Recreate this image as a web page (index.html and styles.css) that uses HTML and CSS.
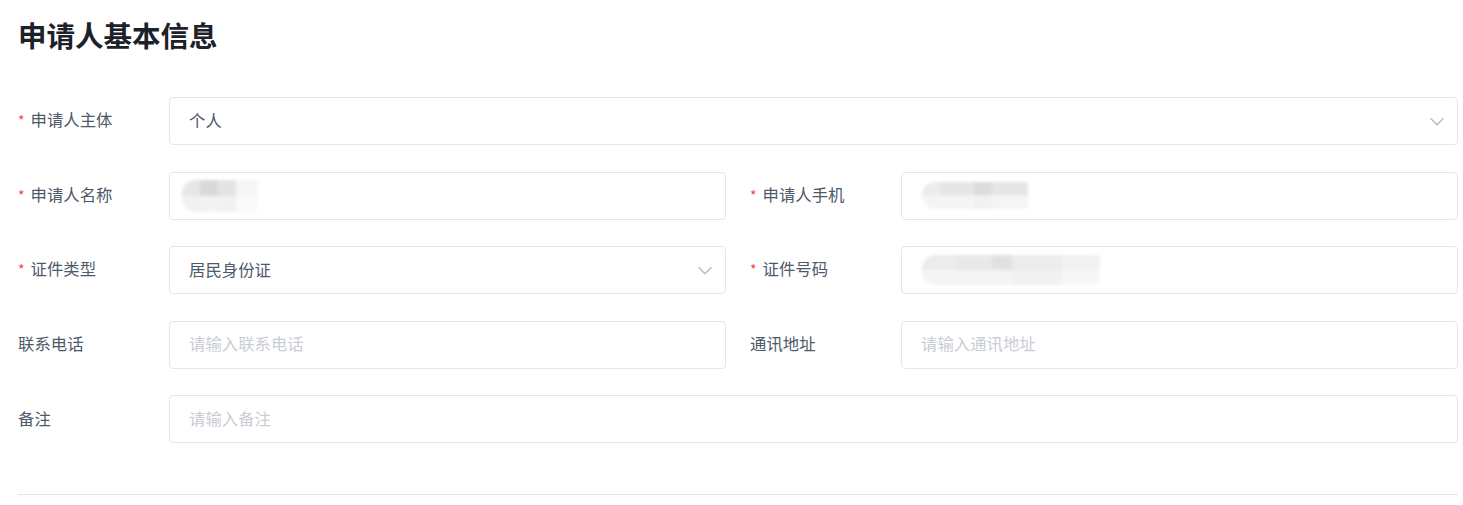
FILE: index.html
```html
<!DOCTYPE html>
<html lang="zh-CN">
<head>
<meta charset="utf-8">
<title>申请人基本信息</title>
<link rel="stylesheet" href="styles.css">
</head>
<body>
<div class="page">
  <h1 class="title">申请人基本信息</h1>
  <div class="form">
    <div class="item full">
      <label class="label"><span class="req">*</span>申请人主体</label>
      <div class="control select">
        <span class="value">个人</span>
        <svg class="arrow" viewBox="0 0 48 48" width="20" height="20"><path d="M39.6 17.443 24.043 33 8.487 17.443" fill="none" stroke="currentColor" stroke-width="3"/></svg>
      </div>
    </div>
    <div class="item">
      <label class="label"><span class="req">*</span>申请人名称</label>
      <div class="control">
        <span class="mosaic m-name"></span>
      </div>
    </div>
    <div class="item">
      <label class="label"><span class="req">*</span>申请人手机</label>
      <div class="control">
        <span class="mosaic m-phone"></span>
      </div>
    </div>
    <div class="item">
      <label class="label"><span class="req">*</span>证件类型</label>
      <div class="control select">
        <span class="value">居民身份证</span>
        <svg class="arrow" viewBox="0 0 48 48" width="20" height="20"><path d="M39.6 17.443 24.043 33 8.487 17.443" fill="none" stroke="currentColor" stroke-width="3"/></svg>
      </div>
    </div>
    <div class="item">
      <label class="label"><span class="req">*</span>证件号码</label>
      <div class="control">
        <span class="mosaic m-id"></span>
      </div>
    </div>
    <div class="item">
      <label class="label">联系电话</label>
      <div class="control"><span class="placeholder">请输入联系电话</span></div>
    </div>
    <div class="item">
      <label class="label">通讯地址</label>
      <div class="control"><span class="placeholder">请输入通讯地址</span></div>
    </div>
    <div class="item full">
      <label class="label">备注</label>
      <div class="control"><span class="placeholder">请输入备注</span></div>
    </div>
  </div>
  <div class="divider"></div>
</div>
</body>
</html>
```
FILE: styles.css
```css
* { box-sizing: border-box; }
html, body { margin: 0; padding: 0; background: #fff; }
body {
  font-family: "Noto Sans CJK SC", "Noto Sans", sans-serif;
  color: #1d2129;
}
.page {
  padding: 15px 5px 0 18px;
}
.title {
  margin: 0;
  font-size: 28.5px;
  line-height: 40px;
  font-weight: 700;
  color: #1d2129;
}
.form {
  margin-top: 42px;
  display: grid;
  grid-template-columns: 1fr 1fr;
  column-gap: 24px;
  row-gap: 26.5px;
}
.item {
  display: flex;
  align-items: center;
}
.item.full { grid-column: 1 / -1; }
.label {
  flex: 0 0 151px;
  font-size: 16.4px;
  color: #4e5969;
  line-height: 24px;
  padding-bottom: 3px;
}
.req {
  color: #f53f3f;
  font-size: 14px;
  margin-right: 6px;
}
.control {
  flex: 1;
  height: 48px;
  border: 1px solid #e5e6eb;
  border-radius: 4px;
  display: flex;
  align-items: center;
  padding: 0 10px 0 19px;
  font-size: 16.4px;
}
.value, .placeholder {
  line-height: 24px;
  padding-bottom: 3px;
}
.value { color: #4e5969; flex: 1; }
.placeholder { color: #c9cdd4; }
.arrow { color: #b4b9c2; margin-left: auto; display: block; }
.mosaic {
  display: block;
  border-radius: 14px 4px 4px 14px;
  filter: blur(1.5px);
}
.m-name {
  width: 76px;
  height: 32px;
  margin-left: -7px;
  background:
    linear-gradient(90deg, #e6e7e9 0 18px, #d9d9db 18px 36px, #e3e4e6 36px 54px, #f6f6f7 54px) top / 100% 50% no-repeat,
    linear-gradient(90deg, #f1f1f2 0 18px, #f3f3f4 18px 36px, #f1f1f2 36px 54px, #fafafa 54px) bottom / 100% 50% no-repeat;
}
.m-phone {
  width: 106px;
  height: 27px;
  margin-left: 1px;
  background:
    linear-gradient(90deg, #ececed 0 18px, #e6e6e8 18px 52px, #dcdcde 52px 70px, #e6e6e8 70px) top / 100% 50% no-repeat,
    linear-gradient(90deg, #f4f4f5 0 52px, #f1f1f2 52px 70px, #f5f5f6 70px) bottom / 100% 50% no-repeat;
}
.m-id {
  width: 178px;
  height: 30px;
  margin-left: 1px;
  background:
    linear-gradient(90deg, #ececed 0 36px, #e9e9eb 36px 70px, #e1e1e3 70px 90px, #ececed 90px 140px, #f2f2f3 140px) top / 100% 50% no-repeat,
    linear-gradient(90deg, #f4f4f5 0 90px, #f1f1f2 90px 140px, #f7f7f8 140px) bottom / 100% 50% no-repeat;
}
.divider {
  margin-top: 51px;
  height: 1px;
  background: #e5e6eb;
}
```
